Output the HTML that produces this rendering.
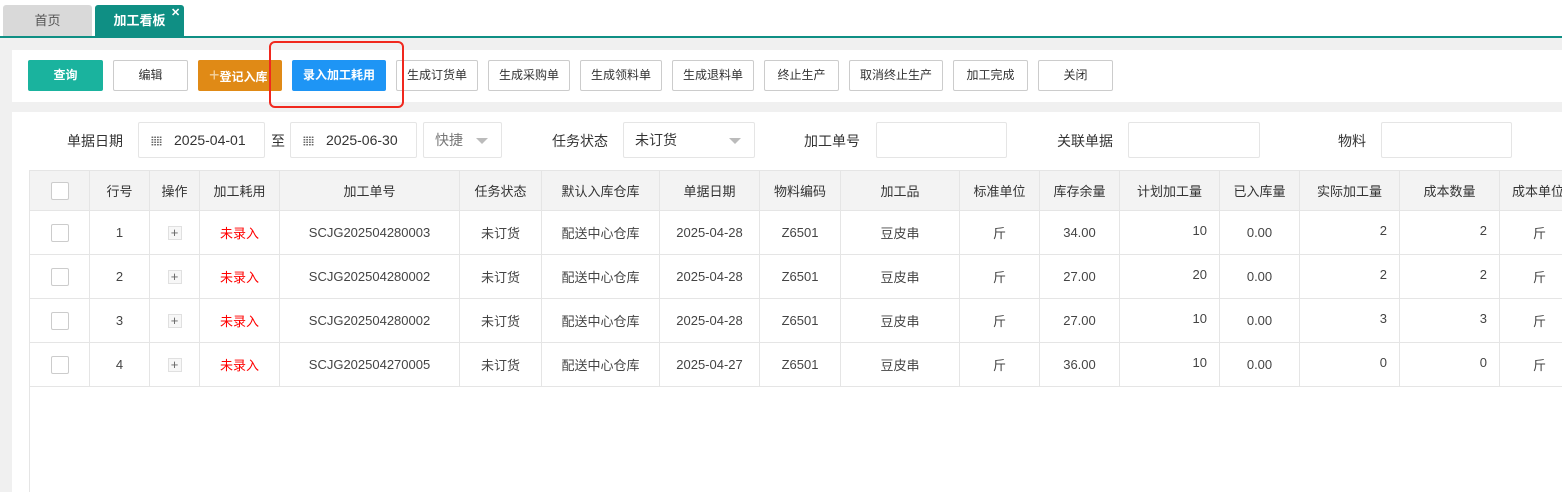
<!DOCTYPE html>
<html><head><meta charset="utf-8"><style>
*{box-sizing:border-box;margin:0;padding:0}
body{width:1562px;height:492px;overflow:hidden;background:#fff;font-family:"Liberation Sans","Noto Sans CJK SC",sans-serif;font-size:13px;color:#333;position:relative}
.a{position:absolute}
.tab{top:5px;height:31px;width:89px;text-align:center;line-height:31px;font-size:13px;border-radius:3px 3px 0 0}
.btn{top:60px;height:31px;line-height:29px;text-align:center;font-size:12px;border:1px solid #ccc;background:#fff;color:#333;border-radius:2px}
.lbl{top:131px;font-size:14px;color:#333}
.inp{top:122px;height:36px;border:1px solid #e5e5e5;border-radius:2px;background:#fff;font-size:14px;line-height:34px;color:#333}
table{position:absolute;left:29px;top:170px;border-collapse:collapse;table-layout:fixed;width:1560px}
td,th{border:1px solid #e5e5e5;text-align:center;font-size:13px;white-space:nowrap;overflow:hidden}
th{background:#f3f3f3;height:40px;font-weight:normal;color:#333}
td{height:44px;color:#444}
.cb{display:inline-block;width:18px;height:18px;border:1px solid #ccc;border-radius:2px;background:#fff;vertical-align:middle}
.pl{display:inline-block;width:14px;height:14px;border:1px solid #e0e0e0;background:#f7f7f7;line-height:11px;font-size:13px;color:#666}
.r{text-align:right;padding-right:12px;vertical-align:top;padding-top:12px}
.red{color:#f00}
.cal{display:inline-block;width:11px;height:10px;margin:0 12px 0 12px;vertical-align:-1px;background:radial-gradient(circle,#666 0.8px,transparent 1px) 0 0/2.75px 2.5px;border:0}
</style></head><body>
<div class="a" style="left:0;top:38px;width:1562px;height:454px;background:#f0f0f0"></div>
<div class="a tab" style="left:3px;background:#d9d9d9;color:#555">首页</div>
<div class="a tab" style="left:95px;background:#0f8f84;color:#fff;font-weight:bold">加工看板</div>
<div class="a" style="left:171px;top:6px;color:#fff;font-size:11px;font-weight:bold">✕</div>
<div class="a" style="left:0;top:36px;width:1562px;height:2px;background:#0f8f84"></div>
<div class="a" style="left:12px;top:50px;width:1550px;height:52px;background:#fff"></div>
<div class="a" style="left:12px;top:112px;width:1550px;height:380px;background:#fff"></div>
<div class="a btn" style="left:28px;width:75px;background:#1ab39e;border-color:#1ab39e;color:#fff;font-weight:bold">查询</div>
<div class="a btn" style="left:113px;width:75px">编辑</div>
<div class="a btn" style="left:198px;width:84px;background:#e08a16;border-color:#e08a16;color:#fff;font-weight:bold;text-align:left;padding-left:10px;white-space:nowrap;overflow:hidden"><span style="font-size:18px;font-weight:normal;color:#f3d2a0">+</span>登记入库</div>
<div class="a btn" style="left:292px;width:94px;background:#1e95f5;border-color:#1e95f5;color:#fff;font-weight:bold">录入加工耗用</div>
<div class="a btn" style="left:396px;width:82px">生成订货单</div>
<div class="a btn" style="left:488px;width:82px">生成采购单</div>
<div class="a btn" style="left:580px;width:82px">生成领料单</div>
<div class="a btn" style="left:672px;width:82px">生成退料单</div>
<div class="a btn" style="left:764px;width:75px">终止生产</div>
<div class="a btn" style="left:849px;width:94px">取消终止生产</div>
<div class="a btn" style="left:953px;width:75px">加工完成</div>
<div class="a btn" style="left:1038px;width:75px">关闭</div>
<div class="a" style="left:269px;top:41px;width:135px;height:67px;border:2px solid #f0281e;border-radius:6px"></div>

<div class="a lbl" style="left:67px">单据日期</div>
<div class="a inp" style="left:138px;width:127px"><span class="cal"></span>2025-04-01</div>
<div class="a lbl" style="left:271px">至</div>
<div class="a inp" style="left:290px;width:127px"><span class="cal"></span>2025-06-30</div>
<div class="a inp" style="left:423px;width:79px;color:#777;padding-left:11px">快捷<span style="position:absolute;right:13px;top:15px;border:6px solid transparent;border-top:6px solid #bbb;border-bottom:0"></span></div>
<div class="a lbl" style="left:552px">任务状态</div>
<div class="a inp" style="left:623px;width:132px;padding-left:11px">未订货<span style="position:absolute;right:13px;top:15px;border:6px solid transparent;border-top:6px solid #bbb;border-bottom:0"></span></div>
<div class="a lbl" style="left:804px">加工单号</div>
<div class="a inp" style="left:876px;width:131px"></div>
<div class="a lbl" style="left:1057px">关联单据</div>
<div class="a inp" style="left:1128px;width:132px"></div>
<div class="a lbl" style="left:1338px">物料</div>
<div class="a inp" style="left:1381px;width:131px"></div>

<div class="a" style="left:29px;top:170px;width:1px;height:322px;background:#e5e5e5"></div>
<table>
<colgroup><col style="width:60px"><col style="width:60px"><col style="width:50px"><col style="width:80px"><col style="width:180px"><col style="width:82px"><col style="width:118px"><col style="width:100px"><col style="width:81px"><col style="width:119px"><col style="width:80px"><col style="width:80px"><col style="width:100px"><col style="width:80px"><col style="width:100px"><col style="width:100px"><col style="width:90px"></colgroup>
<tr><th><span class="cb"></span></th><th>行号</th><th>操作</th><th>加工耗用</th><th>加工单号</th><th>任务状态</th><th>默认入库仓库</th><th>单据日期</th><th>物料编码</th><th>加工品</th><th>标准单位</th><th>库存余量</th><th>计划加工量</th><th>已入库量</th><th>实际加工量</th><th>成本数量</th><th style="text-align:left;padding-left:12px">成本单位</th></tr>
<tr><td><span class="cb"></span></td><td>1</td><td><span class="pl">+</span></td><td class="red">未录入</td><td>SCJG202504280003</td><td>未订货</td><td>配送中心仓库</td><td>2025-04-28</td><td>Z6501</td><td>豆皮串</td><td>斤</td><td>34.00</td><td class="r">10</td><td>0.00</td><td class="r">2</td><td class="r">2</td><td style="text-align:left;padding-left:33px">斤</td></tr>
<tr><td><span class="cb"></span></td><td>2</td><td><span class="pl">+</span></td><td class="red">未录入</td><td>SCJG202504280002</td><td>未订货</td><td>配送中心仓库</td><td>2025-04-28</td><td>Z6501</td><td>豆皮串</td><td>斤</td><td>27.00</td><td class="r">20</td><td>0.00</td><td class="r">2</td><td class="r">2</td><td style="text-align:left;padding-left:33px">斤</td></tr>
<tr><td><span class="cb"></span></td><td>3</td><td><span class="pl">+</span></td><td class="red">未录入</td><td>SCJG202504280002</td><td>未订货</td><td>配送中心仓库</td><td>2025-04-28</td><td>Z6501</td><td>豆皮串</td><td>斤</td><td>27.00</td><td class="r">10</td><td>0.00</td><td class="r">3</td><td class="r">3</td><td style="text-align:left;padding-left:33px">斤</td></tr>
<tr><td><span class="cb"></span></td><td>4</td><td><span class="pl">+</span></td><td class="red">未录入</td><td>SCJG202504270005</td><td>未订货</td><td>配送中心仓库</td><td>2025-04-27</td><td>Z6501</td><td>豆皮串</td><td>斤</td><td>36.00</td><td class="r">10</td><td>0.00</td><td class="r">0</td><td class="r">0</td><td style="text-align:left;padding-left:33px">斤</td></tr>
</table>
</body></html>
